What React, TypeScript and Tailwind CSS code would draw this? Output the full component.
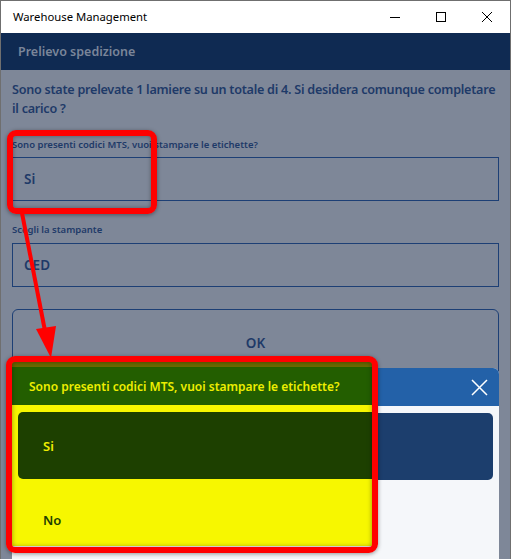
import React from "react";

const font = { fontFamily: '"Noto Sans", "Open Sans", sans-serif' };

function TitleBar() {
  return (
    <div className="h-[32px] bg-white flex items-center justify-between">
      <span className="pl-[12px] text-[11.3px] text-black" style={{ fontFamily: '"Noto Sans", sans-serif' }}>
        Warehouse Management
      </span>
      <div className="flex items-center h-full">
        {/* minimize */}
        <div className="w-[46px] h-full flex items-center justify-center">
          <svg width="10" height="10" viewBox="0 0 10 10">
            <line x1="0" y1="5.5" x2="10" y2="5.5" stroke="#000" strokeWidth="1" />
          </svg>
        </div>
        {/* maximize */}
        <div className="w-[46px] h-full flex items-center justify-center">
          <svg width="10" height="10" viewBox="0 0 10 10">
            <rect x="0.5" y="0.5" width="9" height="9" fill="none" stroke="#000" strokeWidth="1" />
          </svg>
        </div>
        {/* close */}
        <div className="w-[46px] h-full flex items-center justify-center">
          <svg width="10" height="10" viewBox="0 0 10 10">
            <path d="M0 0 L10 10 M10 0 L0 10" stroke="#000" strokeWidth="1" />
          </svg>
        </div>
      </div>
    </div>
  );
}

export default function App() {
  return (
    <div className="w-[511px] h-[559px] overflow-hidden bg-[#7e8798] border-l border-t border-r border-[#6f6f6f] relative" style={font}>
      <TitleBar />

      {/* page header */}
      <div className="h-[37px] bg-[#0f2a52] flex items-center px-[17px] pt-[2px]">
        <span className="text-[12.5px] font-semibold text-[#7a8599]">Prelievo spedizione</span>
      </div>

      {/* page content (dimmed behind modal) */}
      <div className="px-[11px] pt-[10px] text-[#1e3a68]">
        <p className="text-[12.6px] font-semibold leading-[19px] tracking-[-0.25px]">
          Sono state prelevate 1 lamiere su un totale di 4. Si desidera comunque completare il carico ?
        </p>

        <div className="mt-[20px] text-[9.5px] font-semibold leading-[14px]">
          Sono presenti codici MTS, vuoi stampare le etichette?
        </div>
        <div className="mt-[5px] h-[44px] border border-[#1d3f75] flex items-center px-[11px] text-[13.5px] font-semibold">
          Si
        </div>

        <div className="mt-[22px] text-[9.5px] font-semibold leading-[14px]">Scegli la stampante</div>
        <div className="mt-[6px] h-[44px] border border-[#1d3f75] flex items-center px-[11px] text-[13.5px] font-semibold">
          CED
        </div>

        <div className="mt-[22px] h-[68px] border border-[#1d3f75] rounded-[6px] flex items-center justify-center text-[13.5px] font-semibold">
          OK
        </div>
      </div>

      {/* modal dialog */}
      <div className="absolute left-[11px] top-[367px] w-[487px] h-[200px] bg-[#f5f7fa] rounded-t-[6px] overflow-hidden">
        <div className="h-[38px] bg-[#2361a8] flex items-center justify-end pr-[11px]">
          <svg width="17" height="17" viewBox="0 0 17 17">
            <path d="M1 1 L16 16 M16 1 L1 16" stroke="#ffffff" strokeWidth="1.5" />
          </svg>
        </div>
        <div className="px-[6px] pt-[7px]">
          <div className="h-[67px] bg-[#1c3e6d] rounded-[5px]" />
        </div>
      </div>

      {/* highlighted annotation */}
      <div className="absolute left-[11px] top-[361px] w-[361px] h-[184px] bg-[#f7f700] flex flex-col">
        <div className="h-[5px] bg-[#6b6a00]" />
        <div className="h-[38px] bg-[#235e00] flex items-center pl-[17px] pt-[2px]">
          <span className="text-[12px] font-semibold text-[#eeee00]">
            Sono presenti codici MTS, vuoi stampare le etichette?
          </span>
        </div>
        <div className="pl-[6px] pt-[7px]">
          <div className="h-[67px] bg-[#1d4000] rounded-l-[5px] flex items-center pl-[25px] pt-[3px]">
            <span className="text-[13px] font-semibold text-[#eeee00]">Si</span>
          </div>
        </div>
        <div className="pl-[31px] pt-[28px]">
          <span className="text-[13px] font-semibold text-[#1d4000]">No</span>
        </div>
      </div>

      {/* red frames */}
      <div className="absolute left-[6px] top-[129px] w-[150px] h-[84px] border-[6px] border-[#ff0000] rounded-[9px] shadow-[inset_0_0_4px_rgba(0,0,0,0.35),0_1px_4px_rgba(0,0,0,0.4)]" />
      <div className="absolute left-[5px] top-[355px] w-[372px] h-[197px] border-[6px] border-[#ff0000] rounded-[9px] shadow-[inset_0_0_5px_rgba(0,0,0,0.4),0_1px_4px_rgba(0,0,0,0.4)]" />

      {/* arrow */}
      <svg className="absolute left-0 top-0 pointer-events-none" width="511" height="559" viewBox="0 0 511 559">
        <line x1="21" y1="212" x2="45" y2="335" stroke="#ff0000" strokeWidth="4" />
        <polygon points="35,328 55,325 50,357" fill="#ff0000" />
      </svg>
    </div>
  );
}
